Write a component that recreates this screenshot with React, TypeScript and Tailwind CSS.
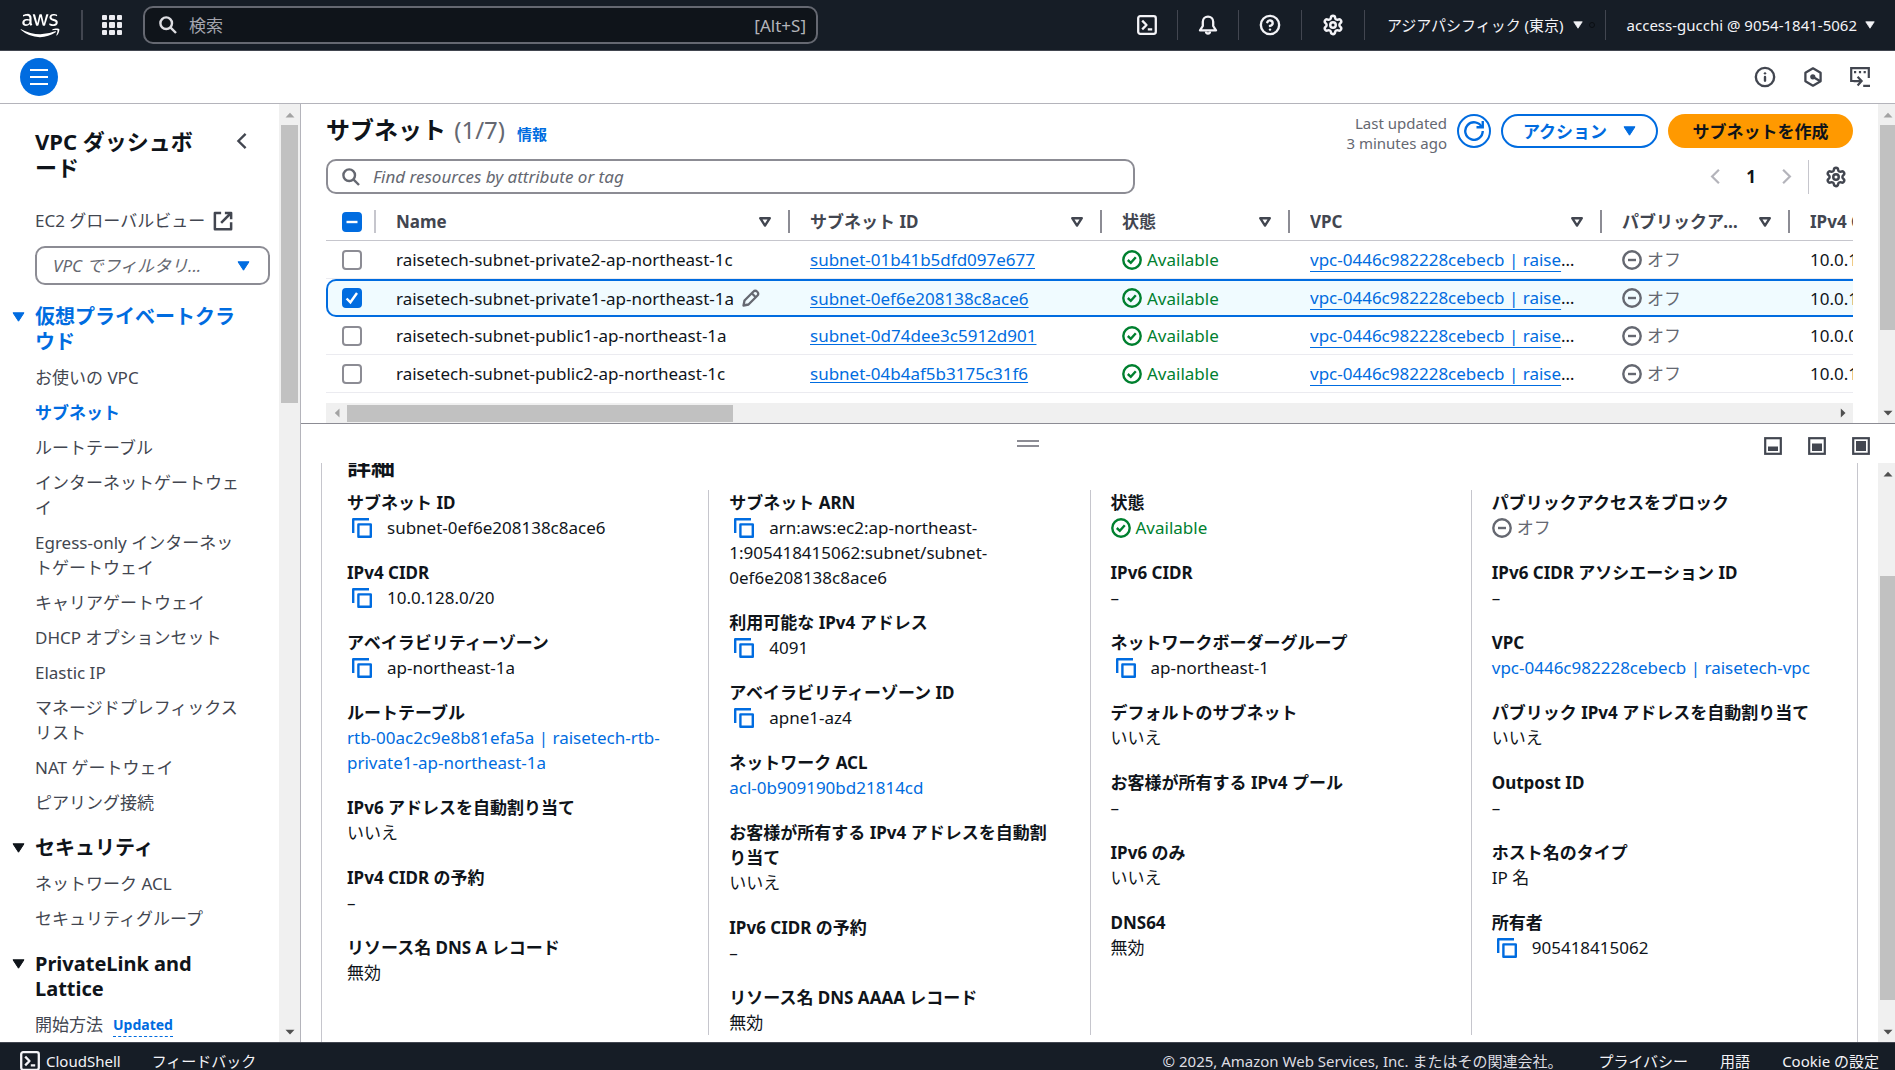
import type { ReactNode } from 'react';
import { CircleHelp, Info, Settings } from 'lucide-react';
import { FaAws } from 'react-icons/fa';

/* ---------- icons ---------- */

function SearchIcon({ className }: { className: string }) {
  return (
    <svg viewBox="0 0 18 18" className={className} fill="none" stroke="currentColor" strokeWidth="2.4" aria-hidden="true">
      <circle cx="7.2" cy="7.2" r="5.8" />
      <path d="m11.4 11.4 5.6 5.6" />
    </svg>
  );
}

function Caret({ className }: { className: string }) {
  return (
    <svg viewBox="0 0 13 10" className={className} fill="currentColor" stroke="currentColor" strokeLinejoin="round" aria-hidden="true">
      <path d="M1 .8h11L6.500 9.200Z" />
    </svg>
  );
}

function SortIcon() {
  return (
    <svg viewBox="0 0 14 12" className="h-3 w-3.5 shrink-0" fill="none" stroke="currentColor" strokeWidth="2.4" strokeLinejoin="round" aria-hidden="true">
      <path d="M2.200 2.200h9.600L7 9.600Z" />
    </svg>
  );
}

function TerminalIcon() {
  return (
    <svg viewBox="0 0 20 20" className="size-5" fill="none" stroke="currentColor" strokeWidth="2.3" strokeLinejoin="round" aria-hidden="true">
      <rect x="1.200" y="1.200" width="17.600" height="17.600" rx="2" />
      <path d="m5.200 5.600 4.300 4.400-4.300 4.400M10.800 14.400h4.400" />
    </svg>
  );
}

function BellIcon() {
  return (
    <svg viewBox="0 0 20 20" className="size-5" fill="none" stroke="currentColor" strokeWidth="2.3" strokeLinejoin="round" aria-hidden="true">
      <path d="M4.800 11V6.800a5.200 5.200 0 0 1 10.400 0V11l2.800 4.400H2L4.800 11Z" />
      <path d="M8 16.500a2 2 0 0 0 4 0" />
    </svg>
  );
}

function HexIcon() {
  return (
    <svg viewBox="0 0 20 20" className="size-5" fill="none" stroke="currentColor" strokeWidth="2.3" strokeLinejoin="round" aria-hidden="true">
      <path d="M10 1.300 17.600 5.700v8.600L10 18.700l-7.600-4.400V5.700Z" />
      <circle cx="9.800" cy="9.800" r="2.600" fill="currentColor" stroke="none" />
      <path d="m10 10 7 4" />
    </svg>
  );
}

function ShellPanelIcon() {
  return (
    <svg viewBox="0 0 20 20" className="size-5" fill="none" stroke="currentColor" strokeWidth="2.200" aria-hidden="true">
      <path d="M5 14H1.200V1.200h17.600V11" />
      <path d="M4 5.200h2.200M8.900 5.200h2.200M13.600 5.200h2.200" />
      <path d="M3.600 14.200h7.200M7.600 9.800l4 4.300-4 4.300M13.200 18.800H20" />
    </svg>
  );
}

function RefreshIcon() {
  return (
    <svg viewBox="0 0 16 16" className="size-5" fill="none" stroke="currentColor" strokeWidth="1.900" aria-hidden="true">
      <path d="M10 5h5V0" />
      <path d="M15 8a7 7 0 1 1-.700-3" />
    </svg>
  );
}

function CopyIcon() {
  return (
    <svg viewBox="0 0 20 20" className="size-5" fill="none" stroke="currentColor" strokeWidth="2.400" strokeLinejoin="round" aria-hidden="true">
      <path d="M1.200 15V1.200H17" />
      <path d="M6.400 6.400h12.400v12.400H6.400Z" />
    </svg>
  );
}

function ExternalIcon() {
  return (
    <svg viewBox="0 0 16 16" className="size-5" fill="none" stroke="currentColor" strokeWidth="2" strokeLinejoin="round" aria-hidden="true">
      <path d="M9.500 1.500h5v5M6.500 9.500l7.500-7.500" />
      <path d="M14.500 9v5.500h-13v-13h5" />
    </svg>
  );
}

function PencilIcon() {
  return (
    <svg viewBox="0 0 18 18" className="size-[18px]" fill="none" stroke="currentColor" strokeWidth="2.300" strokeLinejoin="round" aria-hidden="true">
      <path d="M1.500 16.500 2.500 11.500 11.500 2.500a2.400 2.400 0 0 1 3.500 0l.500.500a2.400 2.400 0 0 1 0 3.500L6.500 15.500Z" />
      <path d="m10 4.500 4 4" />
    </svg>
  );
}

function Chevron({ dir, className }: { dir: 'left' | 'right'; className: string }) {
  return (
    <svg viewBox="0 0 12 20" className={className} fill="none" stroke="currentColor" strokeWidth="2.600" aria-hidden="true">
      <path d={dir === 'left' ? 'M10 2 2 10l8 8' : 'M2 2l8 8-8 8'} />
    </svg>
  );
}

function PanelSizeIcon({ size }: { size: 'small' | 'medium' | 'full' }) {
  const d = { small: 'M5 10.500h8v2.500H5Z', medium: 'M5 7.500h8v5.500H5Z', full: 'M5 5h8v8H5Z' }[size];
  return (
    <svg viewBox="0 0 18 18" className="size-[18px]" aria-hidden="true">
      <rect x="1.200" y="1.200" width="15.600" height="15.600" fill="none" stroke="currentColor" strokeWidth="2.200" />
      <path d={d} fill="currentColor" stroke="currentColor" strokeWidth="2" />
    </svg>
  );
}

/* ---------- shared parts ---------- */

function Available() {
  return (
    <span className="inline-flex items-center gap-[5px] align-top text-[#00802f]">
      <svg viewBox="0 0 20 20" className="size-5 shrink-0" fill="none" stroke="currentColor" strokeWidth="2.400" aria-hidden="true">
        <circle cx="10" cy="10" r="8.700" />
        <path d="m5.800 10 3 2.800 5-5.600" />
      </svg>
      Available
    </span>
  );
}

function Off() {
  return (
    <span className="inline-flex items-center gap-[5px] align-top text-[#656871]">
      <svg viewBox="0 0 20 20" className="size-5 shrink-0" fill="none" stroke="currentColor" strokeWidth="2.400" aria-hidden="true">
        <circle cx="10" cy="10" r="8.700" />
        <path d="M6 10h8" />
      </svg>
      オフ
    </span>
  );
}

function Arrow({ d, on }: { d: string; on: boolean }) {
  return (
    <svg viewBox="0 0 10 10" className={on ? 'size-[10px] text-[#505050]' : 'size-[10px] text-[#a3a3a3]'} fill="currentColor" aria-hidden="true">
      <path d={d} />
    </svg>
  );
}

function VScroll({ className, thumb, upActive }: { className: string; thumb: string; upActive: boolean }) {
  return (
    <div className={`flex shrink-0 flex-col bg-[#f0f0f0] pl-[2px] ${className}`} aria-hidden="true">
      <div className="flex h-[21px] items-center justify-center"><Arrow d="M.5 7.500h9L5 2.800Z" on={upActive} /></div>
      <div className="min-h-0 flex-1"><div className={`bg-[#c1c1c1] ${thumb}`} /></div>
      <div className="flex h-[21px] items-center justify-center"><Arrow d="M.5 2.800h9L5 7.500Z" on /></div>
    </div>
  );
}

function Check({ label, state }: { label: string; state: 'on' | 'off' | 'some' }) {
  return (
    <label className="grid size-5 place-items-center">
      <input
        type="checkbox"
        aria-label={label}
        defaultChecked={state !== 'off'}
        className="col-start-1 row-start-1 size-5 appearance-none rounded-[4px] border-2 border-[#8c8c94] bg-white checked:border-[#006ce0] checked:bg-[#006ce0]"
      />
      {state !== 'off' && (
        <svg viewBox="0 0 20 20" className="pointer-events-none col-start-1 row-start-1 size-5" fill="none" stroke="white" strokeWidth="2.400" aria-hidden="true">
          <path d={state === 'some' ? 'M4.500 10h11' : 'm4.600 10.500 3.800 3.800 6.600-9.300'} />
        </svg>
      )}
    </label>
  );
}

/* ---------- top bar ---------- */

function TopDivider() {
  return <span className="h-[30px] w-px bg-[#424650]" />;
}

function TopBar() {
  return (
    <header className="flex h-[51px] shrink-0 items-center border-b border-[#424650] bg-[#161d26] text-[15px] text-[#f3f3f7]">
      <a href="#home" aria-label="aws" className="ml-5"><FaAws className="h-[31px] w-10 text-white" /></a>
      <span className="ml-[21px] h-[30px] w-[2px] bg-[#424650]" />
      <button aria-label="サービス" className="ml-[19px] grid size-5 grid-cols-3 gap-[2px]">
        {Array.from({ length: 9 }, (_, i) => (
          <span key={i} className="rounded-[1px] bg-[#ebebf0]" />
        ))}
      </button>
      <label className="ml-[21px] flex h-[38px] w-[675px] items-center rounded-[10px] border-2 border-[#656871] bg-[#0f141a] px-[14px] text-[17px] text-[#b4b4bb]">
        <SearchIcon className="size-[18px] shrink-0 text-[#dedee3]" />
        <input aria-label="検索" placeholder="検索" className="ml-3 min-w-0 flex-1 bg-transparent outline-none placeholder:text-[#a4a4ad]" />
        <span className="-mr-1">[Alt+S]</span>
      </label>
      <div className="ml-auto flex items-center">
        <button aria-label="CloudShell" className="mr-5"><TerminalIcon /></button>
        <TopDivider />
        <button aria-label="通知" className="mx-5"><BellIcon /></button>
        <TopDivider />
        <button aria-label="ヘルプ" className="mx-5"><CircleHelp className="size-[22px]" strokeWidth={2.600} /></button>
        <TopDivider />
        <button aria-label="設定" className="mx-5"><Settings className="size-[22px]" strokeWidth={2.700} /></button>
        <TopDivider />
        <button className="ml-[22px] flex items-center">
          アジアパシフィック (東京)
          <Caret className="ml-[9px] h-2 w-[10px]" />
          <span className="ml-[6px] size-[6px] rounded-full border border-[#0a0d12]" />
        </button>
        <span className="ml-[10px] h-[30px] w-px bg-[#424650]" />
        <button className="mr-5 ml-[21px] flex items-center">
          access-gucchi @ 9054-1841-5062
          <Caret className="ml-2 h-2 w-[10px]" />
        </button>
      </div>
    </header>
  );
}

function ToolBar() {
  return (
    <div className="flex h-[53px] shrink-0 items-center border-b border-[#b4b4bb] px-5">
      <button aria-label="メニュー" className="flex size-[38px] flex-col items-center justify-center gap-[5px] rounded-full bg-[#006ce0]">
        <span className="h-[2px] w-[18px] bg-white" />
        <span className="h-[2px] w-[18px] bg-white" />
        <span className="h-[2px] w-[18px] bg-white" />
      </button>
      <div className="mr-[5px] ml-auto flex items-center gap-[27px] text-[#424650]">
        <button aria-label="情報"><Info className="size-[22px]" strokeWidth={2.600} /></button>
        <button aria-label="診断"><HexIcon /></button>
        <button aria-label="CloudShell を開く"><ShellPanelIcon /></button>
      </div>
    </div>
  );
}

/* ---------- side navigation ---------- */

function NavGroup({ title, active, items }: { title: string; active?: boolean; items: ReactNode[] }) {
  return (
    <section className="mb-5">
      <h3 className="mb-[11px]">
        <button className={active ? 'flex items-start text-left text-[#006ce0]' : 'flex items-start text-left text-[#0f141a]'}>
          <Caret className="mt-2 mr-[10px] h-[10px] w-[13px] shrink-0" />
          <span className="w-52 text-[20px] leading-[25px] font-bold">{title}</span>
        </button>
      </h3>
      <ul className="ml-[23px] flex w-[208px] flex-col gap-[10px]">
        {items.map((item, i) => (
          <li key={i}>
            <a href="#nav" className={item === 'サブネット' ? 'block font-bold text-[#006ce0]' : 'block'}>{item}</a>
          </li>
        ))}
      </ul>
    </section>
  );
}

function SideNav() {
  return (
    <aside className="flex w-[301px] shrink-0 border-r border-[#b4b4bb] text-[#424650]">
      <div className="min-w-0 flex-1 overflow-hidden pl-3">
        <div className="mt-6 flex items-start pl-[23px]">
          <h2 className="w-[168px] text-[22px] leading-[26px] font-bold text-[#0f141a]">VPC ダッシュボード</h2>
          <button aria-label="ナビゲーションを閉じる" className="mt-1 ml-[33px]">
            <Chevron dir="left" className="h-[18px] w-3" />
          </button>
        </div>
        <div className="mt-7 pl-[23px]">
          <a href="#ec2" className="flex items-center gap-2 whitespace-nowrap">EC2 グローバルビュー <ExternalIcon /></a>
        </div>
        <div className="mt-[13px] mr-[9px] ml-[23px] grid">
          <select aria-label="VPC でフィルタリング" className="col-start-1 row-start-1 h-[39px] appearance-none rounded-[10px] border-2 border-[#8c8c94] bg-white pl-4 text-[17px] text-[#656871] italic">
            <option>VPC でフィルタリ...</option>
          </select>
          <Caret className="pointer-events-none col-start-1 row-start-1 mr-5 h-[10px] w-[13px] self-center justify-self-end text-[#006ce0]" />
        </div>
        <div className="mt-[19px]">
          <NavGroup
            title="仮想プライベートクラウド"
            active
            items={['お使いの VPC', 'サブネット', 'ルートテーブル', 'インターネットゲートウェイ', 'Egress-only インターネットゲートウェイ', 'キャリアゲートウェイ', 'DHCP オプションセット', 'Elastic IP', 'マネージドプレフィックスリスト', 'NAT ゲートウェイ', 'ピアリング接続']}
          />
          <NavGroup title="セキュリティ" items={['ネットワーク ACL', 'セキュリティグループ']} />
          <NavGroup
            title="PrivateLink and Lattice"
            items={[
              <span key="start" className="flex items-center gap-[10px]">
                開始方法
                <span className="mt-[2px] border-b border-dashed border-[#006ce0] text-[14px] leading-[22px] font-bold text-[#006ce0]">Updated</span>
              </span>,
            ]}
          />
        </div>
      </div>
      <VScroll className="w-[21px] pr-[2px]" thumb="h-[31%]" upActive={false} />
    </aside>
  );
}

/* ---------- subnet table ---------- */

const rows = [
  { name: 'raisetech-subnet-private2-ap-northeast-1c', id: 'subnet-01b41b5dfd097e677', cidr: '10.0.144.0/20' },
  { name: 'raisetech-subnet-private1-ap-northeast-1a', id: 'subnet-0ef6e208138c8ace6', cidr: '10.0.128.0/20', selected: true },
  { name: 'raisetech-subnet-public1-ap-northeast-1a', id: 'subnet-0d74dee3c5912d901', cidr: '10.0.0.0/20' },
  { name: 'raisetech-subnet-public2-ap-northeast-1c', id: 'subnet-04b4af5b3175c31f6', cidr: '10.0.16.0/20' },
];

const headers = ['Name', 'サブネット ID', '状態', 'VPC', 'パブリックアクセスをブロック'];

function SubnetTable() {
  return (
    <table className="w-full table-fixed border-separate border-spacing-0 text-left whitespace-nowrap">
      <colgroup>
        <col className="w-[50px]" />
        <col className="w-[414px]" />
        <col className="w-[312px]" />
        <col className="w-[188px]" />
        <col className="w-[312px]" />
        <col className="w-[188px]" />
        <col />
      </colgroup>
      <thead className="text-[#424650]">
        <tr className="h-[38px]">
          <th className="border-b border-[#c6c6cd] p-0">
            <div className="flex h-[23px] items-center justify-between border-r-2 border-[#c6c6cd] pl-4">
              <Check label="すべて選択" state="some" />
            </div>
          </th>
          {headers.map((h) => (
            <th key={h} className="border-b border-[#c6c6cd] p-0 font-bold">
              <div className="flex h-[23px] items-center justify-between gap-3 border-r-2 border-[#8c8c94] pr-4 pl-5">
                <span className="truncate leading-[25px]">{h}</span>
                <SortIcon />
              </div>
            </th>
          ))}
          <th className="overflow-hidden border-b border-[#c6c6cd] p-0 pl-5 font-bold">IPv4 CIDR</th>
        </tr>
      </thead>
      <tbody>
        {rows.map((r) => {
          const cell = r.selected
            ? 'border-y-2 border-[#006ce0] bg-[#f0fbff] p-0 pl-5'
            : 'border-b border-[#ebebf0] p-0 pl-5';
          const first = r.selected
            ? 'border-y-2 border-l-2 border-[#006ce0] bg-[#f0fbff] p-0 pl-[14px] rounded-l-[10px]'
            : 'border-b border-[#ebebf0] p-0 pl-4';
          return (
            <tr key={r.id} className="h-[38px]">
              <td className={first}><Check label={r.name} state={r.selected ? 'on' : 'off'} /></td>
              <td className={cell}>
                <div className="flex items-center gap-2">
                  {r.name}
                  {r.selected && <button aria-label="名前を編集" className="text-[#656871]"><PencilIcon /></button>}
                </div>
              </td>
              <td className={cell}><a href="#subnet" className="text-[#006ce0] underline underline-offset-2">{r.id}</a></td>
              <td className={cell}><Available /></td>
              <td className={cell}>
                <div className="mr-[27px] truncate leading-[30px]">
                  <a href="#vpc" className="text-[#006ce0] underline underline-offset-[5px]">vpc-0446c982228cebecb | raisetech-vpc</a>
                </div>
              </td>
              <td className={cell}><Off /></td>
              <td className={`overflow-hidden ${cell}`}>{r.cidr}</td>
            </tr>
          );
        })}
      </tbody>
    </table>
  );
}

function SubnetList() {
  return (
    <section className="flex shrink-0 border-b border-[#8c8c94]">
      <div className="min-w-0 flex-1 pt-[10px] pr-[25px] pl-[25px]">
        <div className="flex h-[34px] items-center">
          <h1 className="pb-[3px] text-[24px] font-bold text-[#0f141a]">
            サブネット <span className="ml-[2px] font-normal text-[#656871]">(1/7)</span>
          </h1>
          <a href="#info" className="mt-[6px] ml-3 text-[15px] font-bold text-[#006ce0]">情報</a>
          <p className="mt-1 ml-auto text-right text-[15px] leading-5 text-[#656871]">Last updated<br />3 minutes ago</p>
          <button aria-label="更新" className="ml-[10px] grid size-[34px] place-items-center rounded-full border-2 border-[#006ce0] text-[#006ce0]"><RefreshIcon /></button>
          <button className="ml-[10px] flex h-[34px] w-[157px] items-center justify-center gap-4 rounded-full border-2 border-[#006ce0] font-bold text-[#006ce0]">
            アクション <Caret className="h-[10px] w-[13px]" />
          </button>
          <button className="ml-[10px] h-[34px] w-[185px] rounded-full bg-[#ff9900] font-bold text-[#0f141a]">サブネットを作成</button>
        </div>
        <div className="mt-[11px] flex items-center">
          <label className="flex h-[35px] w-[53%] items-center rounded-[10px] border-2 border-[#8c8c94] px-[14px]">
            <SearchIcon className="size-[18px] shrink-0 text-[#656871]" />
            <input aria-label="リソースを検索" placeholder="Find resources by attribute or tag" className="ml-[13px] min-w-0 flex-1 italic outline-none placeholder:text-[#656871]" />
          </label>
          <nav aria-label="ページ" className="ml-auto flex items-center text-[#b4b4bb]">
            <button aria-label="前のページ"><Chevron dir="left" className="h-[17px] w-[11px]" /></button>
            <button className="mx-[25px] font-bold text-[#0f141a]">1</button>
            <button aria-label="次のページ"><Chevron dir="right" className="h-[17px] w-[11px]" /></button>
          </nav>
          <span className="ml-4 h-[34px] w-px bg-[#c6c6cd]" />
          <button aria-label="設定" className="mr-[6px] ml-4 text-[#424650]"><Settings className="size-[22px]" strokeWidth={2.700} /></button>
        </div>
        <div className="mt-[9px] overflow-hidden"><SubnetTable /></div>
        <div className="mt-[10px] flex h-5 items-center bg-[#f0f0f0]" aria-hidden="true">
          <span className="flex w-[21px] justify-center"><Arrow d="M7.500.5v9L2.800 5Z" on={false} /></span>
          <span className="flex-1"><span className="block h-[17px] w-[26%] bg-[#c1c1c1]" /></span>
          <span className="flex w-[21px] justify-center"><Arrow d="M2.800.5v9L7.500 5Z" on /></span>
        </div>
      </div>
      <VScroll className="w-[17px]" thumb="h-[74%]" upActive={false} />
    </section>
  );
}

/* ---------- details panel ---------- */

function Field({ label, children }: { label: string; children: ReactNode }) {
  return (
    <div>
      <dt className="font-bold">{label}</dt>
      <dd className="break-words">{children}</dd>
    </div>
  );
}

function Copyable({ children }: { children: ReactNode }) {
  return (
    <>
      <button aria-label="コピー" className="mt-[3px] mr-[15px] ml-[5px] align-top text-[#006ce0]"><CopyIcon /></button>
      {children}
    </>
  );
}

function DetailLink({ children }: { children: ReactNode }) {
  return <a href="#detail" className="text-[#006ce0]">{children}</a>;
}

function Column({ first, children }: { first?: boolean; children: ReactNode }) {
  return (
    <dl className={first ? 'flex flex-col gap-5 pr-3' : '-ml-5 flex flex-col gap-5 border-l border-[#c6c6cd] pr-3 pl-5'}>{children}</dl>
  );
}

function DetailsPanel() {
  return (
    <section className="flex min-h-0 flex-1 flex-col">
      <div className="flex h-[39px] shrink-0 items-center">
        <div className="flex flex-1 justify-center">
          <button aria-label="パネルのサイズを変更" className="flex w-[22px] flex-col gap-[3px]">
            <span className="h-[2px] bg-[#8c8c94]" />
            <span className="h-[2px] bg-[#8c8c94]" />
          </button>
        </div>
        <div className="flex gap-[26px] pt-1 pr-[25px] pl-[9px] text-[#424650]">
          <button aria-label="小"><PanelSizeIcon size="small" /></button>
          <button aria-label="中"><PanelSizeIcon size="medium" /></button>
          <button aria-label="全体"><PanelSizeIcon size="full" /></button>
        </div>
      </div>
      <div className="flex min-h-0 flex-1">
        <div className="min-w-0 flex-1 overflow-hidden pr-5 pl-5">
          <div className="min-h-full border-x border-[#c6c6cd] px-[25px] pb-2">
            <div className="flex h-[27px] items-end overflow-hidden pb-[9px]"><h2 className="text-[24px] leading-[30px] font-bold">詳細</h2></div>
            <div className="grid grid-cols-4 gap-x-10">
              <Column first>
                <Field label="サブネット ID"><Copyable>subnet-0ef6e208138c8ace6</Copyable></Field>
                <Field label="IPv4 CIDR"><Copyable>10.0.128.0/20</Copyable></Field>
                <Field label="アベイラビリティーゾーン"><Copyable>ap-northeast-1a</Copyable></Field>
                <Field label="ルートテーブル"><DetailLink>rtb-00ac2c9e8b81efa5a | raisetech-rtb-private1-ap-northeast-1a</DetailLink></Field>
                <Field label="IPv6 アドレスを自動割り当て">いいえ</Field>
                <Field label="IPv4 CIDR の予約">–</Field>
                <Field label="リソース名 DNS A レコード">無効</Field>
              </Column>
              <Column>
                <Field label="サブネット ARN"><Copyable>arn:aws:ec2:ap-northeast-1:905418415062:subnet/subnet-0ef6e208138c8ace6</Copyable></Field>
                <Field label="利用可能な IPv4 アドレス"><Copyable>4091</Copyable></Field>
                <Field label="アベイラビリティーゾーン ID"><Copyable>apne1-az4</Copyable></Field>
                <Field label="ネットワーク ACL"><DetailLink>acl-0b909190bd21814cd</DetailLink></Field>
                <Field label="お客様が所有する IPv4 アドレスを自動割り当て">いいえ</Field>
                <Field label="IPv6 CIDR の予約">–</Field>
                <Field label="リソース名 DNS AAAA レコード">無効</Field>
              </Column>
              <Column>
                <Field label="状態"><Available /></Field>
                <Field label="IPv6 CIDR">–</Field>
                <Field label="ネットワークボーダーグループ"><Copyable>ap-northeast-1</Copyable></Field>
                <Field label="デフォルトのサブネット">いいえ</Field>
                <Field label="お客様が所有する IPv4 プール">–</Field>
                <Field label="IPv6 のみ">いいえ</Field>
                <Field label="DNS64">無効</Field>
              </Column>
              <Column>
                <Field label="パブリックアクセスをブロック"><Off /></Field>
                <Field label="IPv6 CIDR アソシエーション ID">–</Field>
                <Field label="VPC"><DetailLink>vpc-0446c982228cebecb | raisetech-vpc</DetailLink></Field>
                <Field label="パブリック IPv4 アドレスを自動割り当て">いいえ</Field>
                <Field label="Outpost ID">–</Field>
                <Field label="ホスト名のタイプ">IP 名</Field>
                <Field label="所有者"><Copyable>905418415062</Copyable></Field>
              </Column>
            </div>
          </div>
        </div>
        <VScroll className="w-[17px]" thumb="mt-[92px] h-[79%]" upActive />
      </div>
    </section>
  );
}

/* ---------- footer ---------- */

function Footer() {
  return (
    <footer className="h-7 shrink-0 overflow-hidden border-t border-[#424650] bg-[#161d26] text-[#f3f3f7]">
      <div className="flex h-9 items-center pr-4 pl-5 text-[15px]">
        <button className="flex items-center gap-[6px]"><TerminalIcon />CloudShell</button>
        <a href="#feedback" className="ml-[31px]">フィードバック</a>
        <p className="ml-auto text-[#dedee3]">© 2025, Amazon Web Services, Inc. またはその関連会社。</p>
        <a href="#privacy" className="ml-9">プライバシー</a>
        <a href="#terms" className="ml-8">用語</a>
        <button className="ml-8">Cookie の設定</button>
      </div>
    </footer>
  );
}

export default function App() {
  return (
    <div lang="ja" className="flex h-screen flex-col overflow-hidden bg-white font-['Noto_Sans','Noto_Sans_CJK_JP',sans-serif] text-[17px] leading-[25px] text-[#0f141a]">
      <TopBar />
      <ToolBar />
      <div className="flex min-h-0 flex-1">
        <SideNav />
        <main className="flex min-w-0 flex-1 flex-col">
          <SubnetList />
          <DetailsPanel />
        </main>
      </div>
      <Footer />
    </div>
  );
}
